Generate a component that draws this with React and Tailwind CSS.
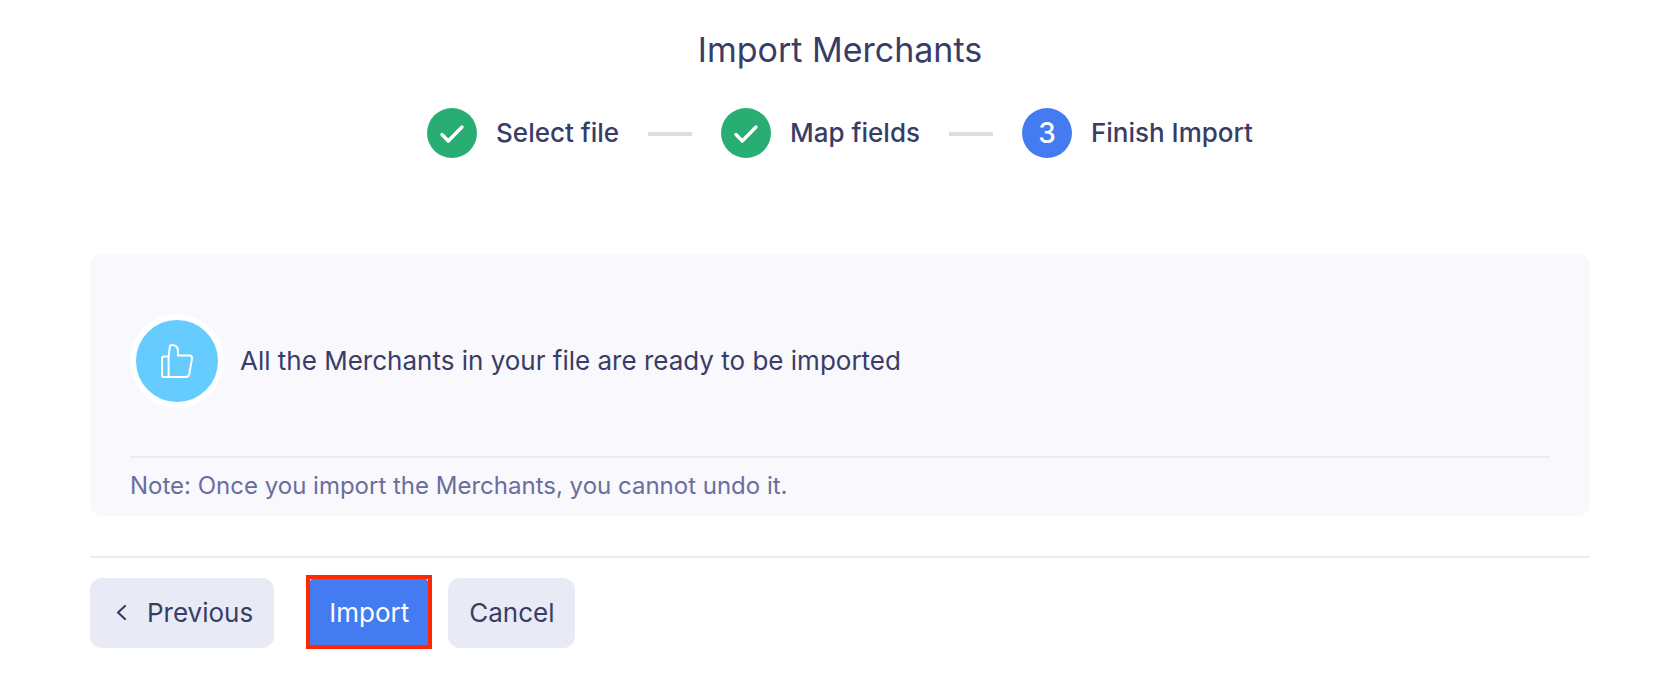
import React from 'react';
import clsx from 'clsx';

const steps = [
  { id: 1, label: 'Select file', done: true },
  { id: 2, label: 'Map fields', done: true },
  { id: 3, label: 'Finish Import', done: false },
];

const CheckIcon = () => (
  <svg width="26" height="20" viewBox="0 0 26 20" fill="none" stroke="white" strokeWidth="3.4" strokeLinecap="round" strokeLinejoin="round" className="mt-0.5" aria-hidden="true">
    <path d="M3 10.5 L9.3 17 L23 3" />
  </svg>
);

const ThumbsUpIcon = () => (
  <svg width="34" height="36" viewBox="0 0 34 36" fill="none" stroke="white" strokeWidth="2" strokeLinejoin="round" aria-hidden="true">
    <path d="M8.6 13.4 H3.4 Q2 13.4 2 14.9 V32.5 Q2 34 3.4 34 H25.8 Q28.6 34 29.2 31.2 L32 15.6 Q32.4 12.5 29.4 12.5 H17.9 V7.6 Q17.9 2 11.8 2 Q10 2 9.8 3.8 L8.6 13.4 V34" />
  </svg>
);

const ChevronLeftIcon = () => (
  <svg width="12" height="18" viewBox="0 0 12 18" fill="none" stroke="currentColor" strokeWidth="2.2" strokeLinecap="round" strokeLinejoin="round" aria-hidden="true">
    <path d="M10 2 L3 8.5 L10 15" />
  </svg>
);

const Stepper = () => (
  <ol className="mt-[38px] flex items-center justify-center gap-[29px]">
    {steps.map((step, index) => (
      <li key={step.id} className="flex items-center gap-[29px]">
        {index > 0 && <span className="mt-0.5 h-1 w-11 bg-[#dddddd]" />}
        <div className="flex items-center gap-[19px]">
          <span
            className={clsx(
              'flex size-[50px] items-center justify-center rounded-full text-[28px] font-medium text-white',
              step.done ? 'bg-[#28ae73]' : 'bg-[#447bf0]'
            )}
          >
            {step.done ? <CheckIcon /> : step.id}
          </span>
          <span className="text-[26px] leading-8 font-medium">{step.label}</span>
        </div>
      </li>
    ))}
  </ol>
);

const App = () => {
  return (
    <main className="bg-white pt-[30px] pr-[82px] pb-11 pl-[90px] font-['Inter',sans-serif] text-[#393d66]">
      <h1 className="text-center text-[34px] leading-10">Import Merchants</h1>
      <Stepper />

      <section className="mt-24 rounded-xl bg-[#f8f8fd] px-10 pt-[60px]">
        <div className="flex items-center gap-4 pb-12">
          <div className="flex size-[94px] items-center justify-center rounded-full border-[6px] border-white bg-[#66ccff]">
            <ThumbsUpIcon />
          </div>
          <p className="text-[26px] leading-8">All the Merchants in your file are ready to be imported</p>
        </div>
        <p className="border-t-2 border-[#ebeaf7] pt-[13px] pb-[15px] text-[24px] leading-[30px] text-[#6a6e9d]">
          Note: Once you import the Merchants, you cannot undo it.
        </p>
      </section>

      <div className="mt-10 flex items-center border-t-2 border-[#ebeaf7] pt-[17px] text-[26px] leading-8">
        <button type="button" className="mt-0.5 flex h-[70px] items-center gap-5 rounded-xl bg-[#e8eaf6] pr-[21px] pl-[25px]">
          <ChevronLeftIcon />
          Previous
        </button>
        {/* Highlighted action */}
        <div className="ml-8 border-4 border-[#ff2600]">
          <button type="button" className="block h-[66px] rounded-t-[3px] bg-[#447bf0] px-[19px] pt-0.5 text-white">
            Import
          </button>
        </div>
        <button type="button" className="mt-0.5 ml-4 h-[70px] rounded-xl bg-[#e8eaf6] px-[21px]">
          Cancel
        </button>
      </div>
    </main>
  );
};

export default App;
